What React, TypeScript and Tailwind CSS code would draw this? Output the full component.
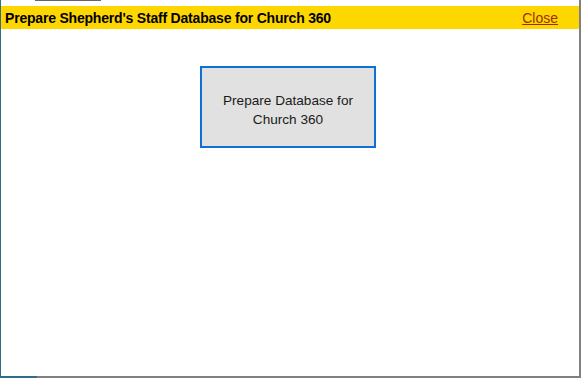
export default function App() {
  return (
    <div className="w-[581px] h-[378px] bg-white relative overflow-hidden" style={{ fontFamily: '"Liberation Sans", Arial, sans-serif' }}>
      <div className="absolute left-0 top-0 w-[1px] h-[378px] bg-[#2f6f86]" />
      <div className="absolute left-[35px] top-0 w-[66px] h-[1px] bg-[#666]" />
      <div className="absolute right-0 top-0 w-[2px] h-[378px] bg-[#808080]" />
      <div className="absolute left-0 bottom-0 w-[581px] h-[2px] bg-[#808080]" />
      <div className="absolute left-0 bottom-0 w-[37px] h-[2px] bg-[#2f6f86]" />
      <div className="flex flex-col h-full pl-[1px] pr-[2px]">
        <div className="h-[6px]" />
        <div className="h-[23px] bg-[#ffd700] flex items-center justify-between pl-[4px] pr-[21px]">
          <span className="text-[14px] font-bold text-black leading-none tracking-[-0.2px]">Prepare Shepherd's Staff Database for Church 360</span>
          <span className="text-[14px] text-[#9a2f0c] underline leading-none">Close</span>
        </div>
        <div className="flex justify-center pt-[37px] pr-[4px]">
          <button className="w-[176px] h-[82px] bg-[#e1e1e1] border-2 border-[#0f6fd4] text-[13.6px] leading-[19px] text-[#1a1a1a] flex items-center justify-center text-center pt-[5px]">
            Prepare Database for<br />Church 360
          </button>
        </div>
      </div>
    </div>
  );
}
